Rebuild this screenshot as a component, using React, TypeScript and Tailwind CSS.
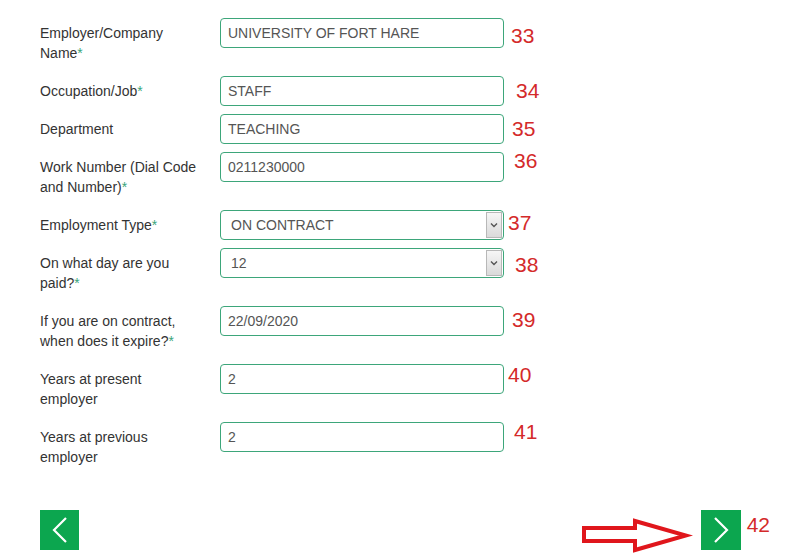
import React from "react";

type Row = {
  label: React.ReactNode;
  value: string;
  select?: boolean;
  num: string;
  numClass: string;
};

const Req = () => <span className="text-[#3aa57a]">*</span>;

const rows: Row[] = [
  { label: <>Employer/Company Name<Req /></>, value: "UNIVERSITY OF FORT HARE", num: "33", numClass: "ml-[7px] mt-[7px]" },
  { label: <>Occupation/Job<Req /></>, value: "STAFF", num: "34", numClass: "ml-[12px] mt-[4px]" },
  { label: "Department", value: "TEACHING", num: "35", numClass: "ml-[8px] mt-[4px]" },
  { label: <>Work Number (Dial Code and Number)<Req /></>, value: "0211230000", num: "36", numClass: "ml-[10px] -mt-[2px]" },
  { label: <>Employment Type<Req /></>, value: "ON CONTRACT", select: true, num: "37", numClass: "ml-[4px] mt-[2px]" },
  { label: <>On what day are you paid?<Req /></>, value: "12", select: true, num: "38", numClass: "ml-[11px] mt-[6px]" },
  { label: <>If you are on contract, when does it expire?<Req /></>, value: "22/09/2020", num: "39", numClass: "ml-[8px] mt-[3px]" },
  { label: "Years at present employer", value: "2", num: "40", numClass: "ml-[4px] mt-0" },
  { label: "Years at previous employer", value: "2", num: "41", numClass: "ml-[10px] -mt-[1px]" },
];

const Field = ({ row }: { row: Row }) => {
  if (row.select) {
    return (
      <div className="flex h-[30px] w-[284px] shrink-0 items-center rounded-[4px] border border-[#3da67a] bg-white pl-[10px] pr-px">
        <span className="flex-1 text-[14px] text-[#555]">{row.value}</span>
        <div className="flex h-[26px] w-[16px] items-center justify-center border border-[#b8b8b8] bg-gradient-to-b from-[#f6f6f6] to-[#dadada]">
          <svg width="8" height="6" viewBox="0 0 8 6">
            <path d="M1 1.5 L4 4.5 L7 1.5" fill="none" stroke="#555" strokeWidth="1.4" />
          </svg>
        </div>
      </div>
    );
  }
  return (
    <div className="flex h-[30px] w-[284px] shrink-0 items-center rounded-[4px] border border-[#3da67a] bg-white px-[7px]">
      <span className="text-[14px] text-[#555]">{row.value}</span>
    </div>
  );
};

const Chevron = ({ dir }: { dir: "left" | "right" }) => (
  <svg width="18" height="26" viewBox="0 0 18 26">
    <path
      d={dir === "left" ? "M15 1 L3 13 L15 25" : "M3 1 L15 13 L3 25"}
      fill="none"
      stroke="white"
      strokeWidth="2.2"
    />
  </svg>
);

export default function App() {
  return (
    <div className="min-h-[558px] w-[797px] bg-white pl-[40px] pt-[18px] font-['Liberation_Sans',Arial,sans-serif]">
      {rows.map((row) => (
        <div key={row.num} className="mb-[8px] flex items-start">
          <label className="w-[180px] shrink-0 pr-[20px] pt-[5px] pb-[5px] text-[14px] leading-[20px] text-[#333]">
            {row.label}
          </label>
          <Field row={row} />
          <span className={`text-[21px] leading-none text-[#d42a2a] ${row.numClass}`}>{row.num}</span>
        </div>
      ))}

      <div className="mt-[38px] flex w-[700px] items-start">
        <button className="flex h-[40px] w-[39px] items-center justify-center bg-[#0ca64f]">
          <Chevron dir="left" />
        </button>
        <svg className="ml-auto mr-[8px] mt-[6px]" width="112" height="38" viewBox="582 516 112 38">
          <path
            d="M585 528 L636 528 L636 521 L687 535.5 L636 550 L636 541 L585 541 Z"
            fill="none"
            stroke="#e0161c"
            strokeWidth="4"
            strokeLinejoin="miter"
          />
        </svg>
        <button className="flex h-[40px] w-[40px] items-center justify-center bg-[#0ca64f]">
          <Chevron dir="right" />
        </button>
        <span className="ml-[6px] mt-[4px] -mr-[30px] text-[21px] leading-none text-[#d42a2a]">42</span>
      </div>
    </div>
  );
}
